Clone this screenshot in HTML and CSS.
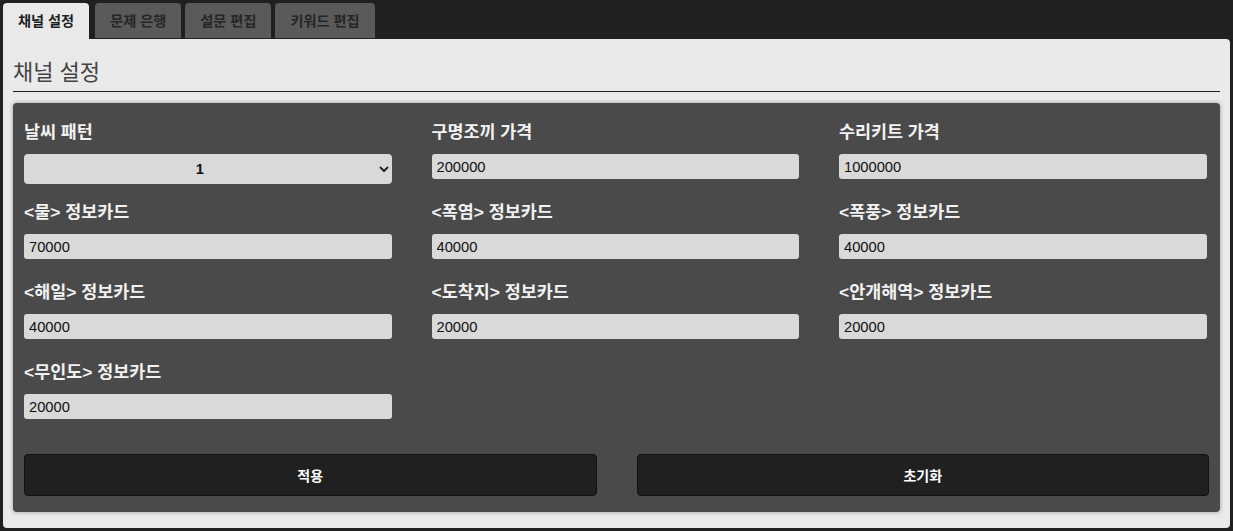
FILE: index.html
```html
<!DOCTYPE html>
<html lang="ko">
<head>
<meta charset="utf-8">
<title>채널 설정</title>
<link rel="stylesheet" href="styles.css">
</head>
<body>
<div class="tabs">
  <div class="tab active">채널 설정</div>
  <div class="tab">문제 은행</div>
  <div class="tab">설문 편집</div>
  <div class="tab">키워드 편집</div>
</div>
<div class="page">
  <h2 class="title">채널 설정</h2>
  <div class="card">
    <div class="grid">
      <div class="field">
        <label class="label">날씨 패턴</label>
        <div class="select-wrap">
          <select class="select"><option>1</option><option>2</option><option>3</option></select>
          <svg class="chev" width="10" height="7" viewBox="0 0 10 7"><path d="M1.5 1.5 L5 5 L8.5 1.5" fill="none" stroke="#1a1a1a" stroke-width="1.8" stroke-linecap="round" stroke-linejoin="round"/></svg>
        </div>
      </div>
      <div class="field">
        <label class="label">구명조끼 가격</label>
        <input class="input" type="text" value="200000">
      </div>
      <div class="field">
        <label class="label">수리키트 가격</label>
        <input class="input" type="text" value="1000000">
      </div>
      <div class="field">
        <label class="label">&lt;물&gt; 정보카드</label>
        <input class="input" type="text" value="70000">
      </div>
      <div class="field">
        <label class="label">&lt;폭염&gt; 정보카드</label>
        <input class="input" type="text" value="40000">
      </div>
      <div class="field">
        <label class="label">&lt;폭풍&gt; 정보카드</label>
        <input class="input" type="text" value="40000">
      </div>
      <div class="field">
        <label class="label">&lt;해일&gt; 정보카드</label>
        <input class="input" type="text" value="40000">
      </div>
      <div class="field">
        <label class="label">&lt;도착지&gt; 정보카드</label>
        <input class="input" type="text" value="20000">
      </div>
      <div class="field">
        <label class="label">&lt;안개해역&gt; 정보카드</label>
        <input class="input" type="text" value="20000">
      </div>
      <div class="field">
        <label class="label">&lt;무인도&gt; 정보카드</label>
        <input class="input" type="text" value="20000">
      </div>
    </div>
    <div class="actions">
      <button class="btn">적용</button>
      <button class="btn">초기화</button>
    </div>
  </div>
</div>
</body>
</html>
```
FILE: styles.css
```css
html, body {
  margin: 0;
  background: #202020;
}
body {
  padding: 3px;
  font-family: "Liberation Sans", "Noto Sans CJK KR", sans-serif;
}
.tabs {
  display: flex;
  gap: 4px;
  height: 36px;
}
.tab {
  flex: none;
  height: 35px;
  line-height: 36px;
  padding: 0 15px;
  background: #5a5a5a;
  color: #262626;
  font-size: 14.2px;
  font-weight: bold;
  border-radius: 4px 4px 0 0;
}
.tab.active {
  background: #e9e9e9;
  color: #1e1e1e;
  height: 36px;
  margin-right: 2px;
}
.page {
  background: #eaeaea;
  border-radius: 0 4px 4px 4px;
  padding: 10px 10px 16px;
}
.title {
  margin: 10px 0 0;
  font-size: 22px;
  line-height: 28px;
  font-weight: normal;
  color: #444;
  padding-bottom: 4px;
  border-bottom: 1px solid #1e1e1e;
}
.card {
  margin-top: 11px;
  background: #4a4a4a;
  border-radius: 4px;
  padding: 19px 11px 16px;
  box-shadow: 0 0 4px rgba(0, 0, 0, 0.35);
}
.grid {
  display: grid;
  grid-template-columns: repeat(3, 367.5px);
  column-gap: 40px;
  row-gap: 18px;
}
.field {
  display: flex;
  flex-direction: column;
  gap: 12px;
  height: 62px;
}
.label {
  font-size: 17.4px;
  line-height: 20px;
  font-weight: bold;
  color: #f2f2f2;
}
.input {
  box-sizing: border-box;
  width: 100%;
  height: 25px;
  border: none;
  border-radius: 3px;
  background: #d9d9d9;
  padding: 0 5px;
  font-family: "Liberation Sans", "Noto Sans CJK KR", sans-serif;
  font-size: 14.7px;
  color: #111;
  outline: none;
}
.select-wrap {
  position: relative;
  height: 30px;
}
.select {
  box-sizing: border-box;
  width: 100%;
  height: 30px;
  border: none;
  border-radius: 4px;
  background: #d9d9d9;
  appearance: none;
  -webkit-appearance: none;
  padding: 0 16px 0 0;
  text-align: center;
  text-align-last: center;
  font-family: "Liberation Sans", "Noto Sans CJK KR", sans-serif;
  font-size: 14.7px;
  font-weight: bold;
  color: #111;
  outline: none;
}
.chev {
  position: absolute;
  right: 3px;
  top: 12px;
  pointer-events: none;
}
.actions {
  display: grid;
  grid-template-columns: 1fr 1fr;
  column-gap: 40px;
  margin-top: 30px;
}
.btn {
  height: 42px;
  background: #202020;
  border: 1px solid #111;
  border-radius: 4px;
  color: #fff;
  font-family: "Liberation Sans", "Noto Sans CJK KR", sans-serif;
  font-size: 14px;
  font-weight: bold;
}
```
